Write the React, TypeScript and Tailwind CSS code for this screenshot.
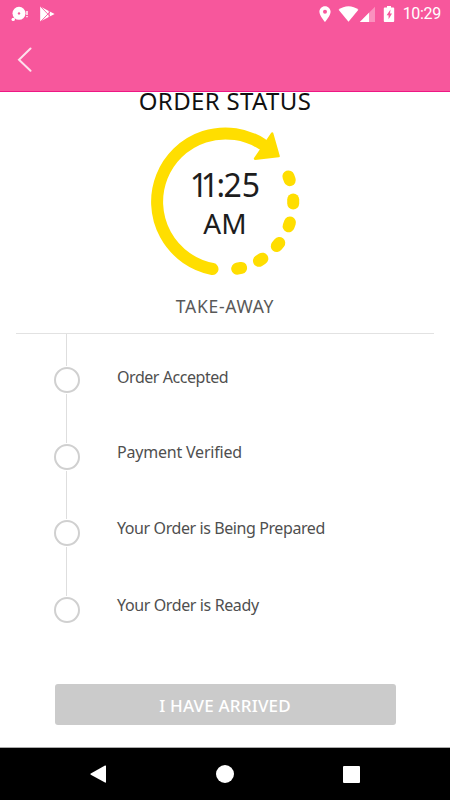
import { clsx } from 'clsx';

const STEPS = [
  { label: 'Order Accepted', className: 'mb-[3px] tracking-[-0.45px]' },
  { label: 'Payment Verified', className: 'mb-[5px] tracking-[-0.2px]' },
  { label: 'Your Order is Being Prepared', className: 'mb-[5px] tracking-[-0.41px]' },
  { label: 'Your Order is Ready', className: 'mb-[5px] tracking-[-0.38px]' },
];

const DOTS = [-20, 0, 19.5, 39, 58.5, 78];

const StatusBar = () => (
  <div className="flex h-[27px] items-center justify-between pl-[11px] pr-[9px] text-white">
    <div className="flex items-center gap-[10px]">
      <svg width="18" height="16" viewBox="11 5 18 16" fill="currentColor">
        <circle cx="19" cy="12.3" r="6.5" />
        <circle cx="13.2" cy="18.4" r="1.7" />
        <path d="M13 18.5l3-3" stroke="currentColor" strokeWidth="1" />
        <circle cx="19" cy="12.4" r="1.2" fill="#f7579c" />
        <path d="M27 10v4M27 15v1.2" stroke="currentColor" strokeWidth="1.4" />
      </svg>
      <svg width="16" height="16" viewBox="38 5 16 16">
        <path d="M39.2 5.6L53.6 13L39.2 20.6z" fill="currentColor" />
        <path d="M39.5 5.5l9.5 9.8M39.5 20.7l9.5-9.8M48.2 9.8v6.6" stroke="#f7579c" strokeWidth="0.9" fill="none" />
      </svg>
    </div>
    <div className="flex items-center">
      <svg width="82" height="18" viewBox="319 4 82 18" fill="currentColor">
        <path
          fillRule="evenodd"
          d="M325 5.2c-3.2 0-5.6 2.5-5.6 5.6 0 4 5.6 10.2 5.6 10.2s5.6-6.2 5.6-10.2c0-3.1-2.4-5.6-5.6-5.6zm0 3.6a2 2 0 1 1 0 4 2 2 0 0 1 0-4z"
        />
        <path d="M338.6 8.8c5.6-4.7 14.2-4.7 19.8 0L348.5 20.8z" />
        <path d="M375 5.8V21h-15.2z" opacity="0.35" />
        <path d="M369 11.8V21h-9.2z" />
        <path
          fillRule="evenodd"
          d="M387 5h4v1.500h2.300q.9 0 .9.9v12.700q0 .9-.9.9h-8.600q-.9 0-.9-.9V7.400q0-.9.9-.9h2.300zM390.500 8.500l-3.900 5.800h2v4l3.400-5.800h-2z"
        />
      </svg>
      <span className="ml-[2px] font-[Roboto] text-[16px] leading-[18px] tracking-[-0.3px]">10:29</span>
    </div>
  </div>
);

const TimerRing = () => (
  <div className="relative mt-4 h-[151px] w-[150px]">
    <svg width="150" height="151" viewBox="150 126 150 151" fill="none" stroke="#ffde00">
      <path d="M212.5 269A68.4 68.4 0 1 1 262 144" strokeWidth="12" strokeLinecap="round" />
      <path d="M272.2 133.5L278.6 156L255 158.7z" fill="#ffde00" strokeWidth="2.4" strokeLinejoin="round" />
      <g transform="translate(225 201.6)" strokeWidth="12" strokeLinecap="round">
        {DOTS.map((deg) => (
          <path key={deg} d="M68.2 -2V2" transform={`rotate(${deg})`} />
        ))}
      </g>
    </svg>
    <div className="absolute inset-0 flex flex-col items-center pt-[39px] text-[#1d1d1d]">
      <span className="text-[32px] leading-[39px]">
        <span className="tracking-[-7.5px]">1</span>
        <span className="tracking-[-2.5px]">1</span>
        <span className="tracking-[-1.5px]">:</span>
        25
      </span>
      <span className="text-[28px] leading-[39px]">AM</span>
    </div>
  </div>
);

const App = () => (
  <div className="flex h-[800px] w-[450px] flex-col overflow-hidden bg-white font-['Noto_Sans',sans-serif]">
    <header className="h-[92px] shrink-0 border-b border-[#ee1684] bg-[#f7579c]">
      <StatusBar />
      <button className="ml-[17px] mt-[20px] block text-[#fde0ec]" aria-label="Back">
        <svg width="16" height="25" viewBox="17 47 16 25" fill="none" stroke="currentColor" strokeWidth="2">
          <path d="M30.5 48.5L19 59.7L30.5 70.7" strokeLinecap="round" />
        </svg>
      </button>
    </header>

    <main className="flex flex-1 flex-col items-center">
      <h1 className="text-[24px] leading-[18px] tracking-[0.35px] text-[#111]">ORDER STATUS</h1>
      <TimerRing />
      <p className="mt-[19px] text-[17.5px] leading-5 tracking-[0.7px] text-[#595959]">TAKE-AWAY</p>
      <hr className="mt-[17px] w-[418px] border-[#e2e2e2]" />

      <ul className="w-full pl-[54px]">
        {STEPS.map((step, i) => (
          <li key={step.label} className={clsx('flex items-end gap-[37px]', i === 0 ? 'h-[59px]' : 'h-[76.67px]')}>
            <div className="flex h-full w-[26px] flex-col items-center">
              <span className={clsx('mb-px mr-px w-px flex-1 bg-[#dedede]', i > 0 && 'mt-px')} />
              <span className="size-[26px] rounded-full border-2 border-[#d0d0d0]" />
            </div>
            <span className={clsx('text-[16px] leading-[26px] text-[#4f4f4f]', step.className)}>{step.label}</span>
          </li>
        ))}
      </ul>

      <button className="mt-[61px] h-[41px] w-[341px] rounded-[3px] bg-[#cbcbcb] pt-[2px] text-[17px] font-medium tracking-[0.2px] text-white">
        I HAVE ARRIVED
      </button>
    </main>

    <nav className="flex h-[53px] shrink-0 items-center justify-between border-t border-[#aaa] bg-black px-[90px] text-white">
      <svg width="16" height="18" viewBox="0 0 16 18" fill="currentColor">
        <path d="M15 0.5q1-.4 1 .6V17q0 1-1 .5L.8 9.7q-1-.7 0-1.3z" />
      </svg>
      <span className="size-[18px] rounded-full bg-white" />
      <span className="size-[17px] rounded-[1px] bg-white" />
    </nav>
  </div>
);

export default App;
